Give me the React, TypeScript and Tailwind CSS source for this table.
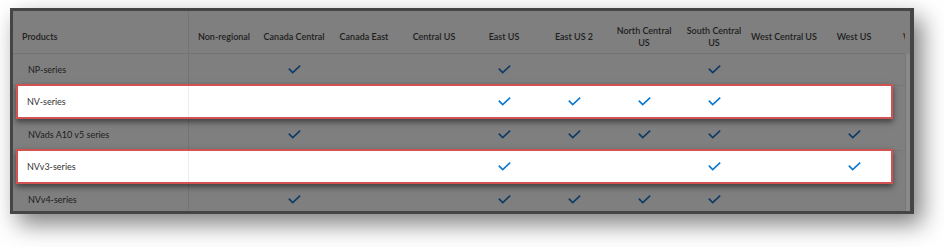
import React from "react";

const cols: React.ReactNode[] = [
  "Non-regional",
  "Canada Central",
  "Canada East",
  "Central US",
  "East US",
  "East US 2",
  <>North Central<br />US</>,
  <>South Central<br />US</>,
  "West Central US",
  "West US",
  "West US 2",
];

type Row = { name: string; checks: number[]; hl: boolean };

const rows: Row[] = [
  { name: "NP-series", checks: [1, 4, 7], hl: false },
  { name: "NV-series", checks: [4, 5, 6, 7], hl: true },
  { name: "NVads A10 v5 series", checks: [1, 4, 5, 6, 7, 9], hl: false },
  { name: "NVv3-series", checks: [4, 7, 9], hl: true },
  { name: "NVv4-series", checks: [1, 4, 5, 6, 7], hl: false },
];

function Check({ hl }: { hl: boolean }) {
  return (
    <svg
      width="13"
      height="9"
      viewBox="0 0 13 9"
      fill="none"
      className={hl ? "text-[#0b78d0]" : "text-[#0e3a66]"}
    >
      <path d="M0.8 3.6 L4.7 7.6 L12.2 0.6" stroke="currentColor" strokeWidth="1.6" />
    </svg>
  );
}

function Cells({ checks, hl }: { checks: number[]; hl: boolean }) {
  return (
    <>
      {cols.map((_, i) => (
        <div key={i} className="w-[70px] shrink-0 flex items-center justify-center">
          {checks.includes(i) ? <Check hl={hl} /> : null}
        </div>
      ))}
    </>
  );
}

export default function App() {
  return (
    <div
      className="w-[944px] h-[247px] bg-white pt-[8px] pl-[10px] overflow-hidden"
      style={{ fontFamily: "Lato, 'Noto Sans', sans-serif" }}
    >
      <div className="w-[904px] h-[206px] border-l-[3px] border-t-[3px] border-r-[4px] border-b-[3px] border-[#454545] bg-[#7f7f7f] flex shadow-[8px_10px_22px_rgba(0,0,0,0.5)]">
        <div className="flex-1 overflow-hidden flex flex-col">
          {/* header */}
          <div className="h-[42.5px] shrink-0 flex border-b border-[#737373] text-[9px] leading-[11.5px] font-semibold text-[#1e1e1e]">
            <div className="w-[176px] shrink-0 border-r border-[#747474] pl-[9px] pt-[10px] flex items-center">
              Products
            </div>
            {cols.map((c, i) => (
              <div
                key={i}
                className="w-[70px] shrink-0 pt-[10px] flex items-center justify-center text-center whitespace-nowrap"
              >
                <span>{c}</span>
              </div>
            ))}
          </div>
          {rows.map((r) =>
            r.hl ? (
              <div key={r.name} className="h-[32.5px] shrink-0 flex">
                <div className="relative z-10 self-start -mt-[2px] ml-[3px] w-[877px] h-[35px] shrink-0 bg-white border-2 border-[#d25252] shadow-[0_3px_6px_rgba(0,0,0,0.5)] flex overflow-hidden text-[9px] text-[#333333]">
                  <div className="w-[171px] shrink-0 border-r border-[#ececec] pl-[9px] flex items-center">
                    {r.name}
                  </div>
                  <Cells checks={r.checks} hl />
                </div>
              </div>
            ) : (
              <div
                key={r.name}
                className="h-[32.5px] shrink-0 flex border-b border-[#777777] text-[9px] text-[#202020]"
              >
                <div className="w-[176px] shrink-0 border-r border-[#747474] pl-[15px] flex items-center">
                  {r.name}
                </div>
                <Cells checks={r.checks} hl={false} />
              </div>
            )
          )}
        </div>
        <div className="w-[5px] shrink-0 flex flex-col">
          <div className="h-[42.5px] shrink-0" />
          <div className="flex-1 bg-[#8a8a8a] border-l border-[#767676]" />
        </div>
      </div>
    </div>
  );
}
